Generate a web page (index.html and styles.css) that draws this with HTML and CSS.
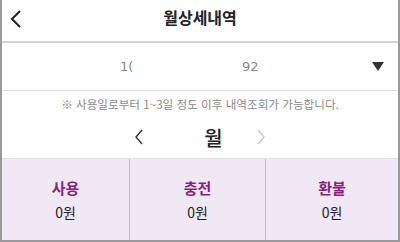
FILE: index.html
```html
<!DOCTYPE html>
<html lang="ko">
  <head>
    <meta charset="UTF-8" />
    <meta name="viewport" content="width=device-width, initial-scale=1.0" />
    <title>월상세내역</title>
    <link rel="stylesheet" href="styles.css">
  </head>
  <body>
    <div class="screen">
      <!-- Header -->
      <header class="header">
        <span class="back">
          <svg width="12" height="18" viewBox="0 0 12 18">
            <path d="M10 1 L2 9 L10 17" fill="none" stroke="#222" stroke-width="2" />
          </svg>
        </span>
        <h1 class="title">월상세내역</h1>
      </header>

      <!-- Card picker -->
      <div class="picker">
        <span class="num num-left">1(</span>
        <span class="num num-right">92</span>
        <span class="caret"></span>
      </div>

      <p class="notice">※ 사용일로부터 1~3일 정도 이후 내역조회가 가능합니다.</p>

      <!-- Month nav -->
      <div class="month-nav">
        <svg class="arrow" width="10" height="16" viewBox="0 0 10 16">
          <path d="M8 1 L2 8 L8 15" fill="none" stroke="#333" stroke-width="1.4" />
        </svg>
        <span class="month">월</span>
        <svg class="arrow" width="10" height="16" viewBox="0 0 10 16">
          <path d="M2 1 L8 8 L2 15" fill="none" stroke="#c8c8c8" stroke-width="1.4" />
        </svg>
      </div>

      <!-- Summary -->
      <div class="summary">
        <div class="cell cell-use">
          <span class="label">사용</span>
          <span class="amount">0원</span>
        </div>
        <div class="cell cell-charge">
          <span class="label">충전</span>
          <span class="amount">0원</span>
        </div>
        <div class="cell cell-refund">
          <span class="label">환불</span>
          <span class="amount">0원</span>
        </div>
      </div>
    </div>
  </body>
</html>
```

FILE: styles.css
```css
/* Base */
html,
body {
  margin: 0;
  padding: 0;
  background: #fff;
}

body {
  font-family: "Noto Sans CJK KR", "Noto Sans", sans-serif;
  color: #222;
}

.screen {
  width: 400px;
  height: 242px;
  box-sizing: border-box;
  border-left: 2px solid #9a9a9a;
  border-right: 2px solid #9a9a9a;
  border-bottom: 2px solid #9a9a9a;
  display: flex;
  flex-direction: column;
  overflow: hidden;
}

/* Header */
.header {
  height: 41px;
  display: flex;
  align-items: center;
  justify-content: center;
  position: relative;
  border-bottom: 2px solid #d4d4d4;
}

.back {
  position: absolute;
  left: 8px;
  top: 9px;
}

.title {
  margin: 0;
  font-size: 16px;
  font-weight: 700;
  color: #222;
  line-height: 1;
  margin-top: -8px;
}

/* Picker */
.picker {
  height: 47px;
  display: flex;
  align-items: center;
  position: relative;
  border-bottom: 1px solid #dcdcdc;
}

.num {
  font-family: "DejaVu Sans", sans-serif;
  font-size: 13px;
  color: #888;
  position: absolute;
  top: 16px;
}

.num-left {
  left: 118px;
}

.num-right {
  left: 240px;
}

.caret {
  position: absolute;
  right: 14px;
  top: 19px;
  width: 0;
  height: 0;
  border-left: 6px solid transparent;
  border-right: 6px solid transparent;
  border-top: 9px solid #333;
}

/* Notice */
.notice {
  margin: 0;
  padding-top: 6px;
  text-align: center;
  font-size: 11.6px;
  color: #8a8a8a;
  line-height: 15px;
}

/* Month nav */
.month-nav {
  height: 47px;
  display: flex;
  align-items: center;
  justify-content: center;
  padding-top: 4px;
  box-sizing: border-box;
  border-bottom: 1px solid #e2e2e2;
}

.month {
  font-size: 20px;
  font-weight: 500;
  color: #222;
  margin: 0 33px 0 60px;
}

/* Summary */
.summary {
  flex: 1;
  display: flex;
  background: #f0e8f4;
}

.cell {
  display: flex;
  flex-direction: column;
  align-items: center;
  justify-content: center;
  gap: 4px;
  border-right: 1px solid #c4bcc8;
}

.cell-use {
  width: 127px;
}

.cell-charge {
  width: 135px;
}

.cell-refund {
  flex: 1;
  border-right: none;
}

.label {
  font-size: 15px;
  font-weight: 700;
  color: #8b1d80;
  line-height: 20px;
}

.amount {
  font-size: 14px;
  color: #222;
  line-height: 20px;
}
```
